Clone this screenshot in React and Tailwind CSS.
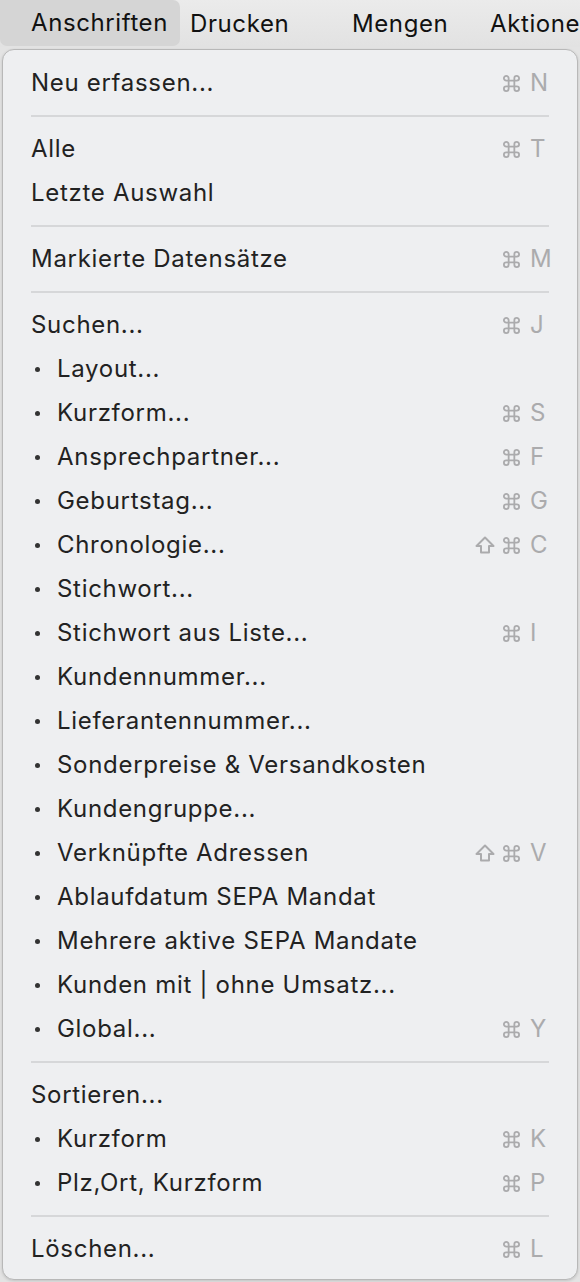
import React from "react";

const font = { fontFamily: "Inter, 'Noto Sans', sans-serif" };

function Shift() {
  return (
    <svg width="22" height="20" viewBox="0 0 22 20" className="inline-block">
      <path d="M11 2.5 L19.5 11 L15 11 L15 17.5 L7 17.5 L7 11 L2.5 11 Z" fill="none" stroke="#ababad" strokeWidth="2" strokeLinejoin="round" />
    </svg>
  );
}

function Cmd() {
  return (
    <svg width="19" height="19" viewBox="0 0 20 20" className="inline-block">
      <path d="M7 7 H13 V13 H7 Z M7 7 V4.5 A2.5 2.5 0 1 0 4.5 7 H7 M13 7 V4.5 A2.5 2.5 0 1 1 15.5 7 H13 M7 13 V15.5 A2.5 2.5 0 1 1 4.5 13 H7 M13 13 V15.5 A2.5 2.5 0 1 0 15.5 13 H13" fill="none" stroke="#ababad" strokeWidth="1.9" />
    </svg>
  );
}

const items = [
  { t: "Neu erfassen...", k: "N" },
  "sep",
  { t: "Alle", k: "T" },
  { t: "Letzte Auswahl" },
  "sep",
  { t: "Markierte Datensätze", k: "M" },
  "sep",
  { t: "Suchen...", k: "J" },
  { t: "Layout...", b: true },
  { t: "Kurzform...", b: true, k: "S" },
  { t: "Ansprechpartner...", b: true, k: "F" },
  { t: "Geburtstag...", b: true, k: "G" },
  { t: "Chronologie...", b: true, k: "C", s: true },
  { t: "Stichwort...", b: true },
  { t: "Stichwort aus Liste...", b: true, k: "I" },
  { t: "Kundennummer...", b: true },
  { t: "Lieferantennummer...", b: true },
  { t: "Sonderpreise & Versandkosten", b: true },
  { t: "Kundengruppe...", b: true },
  { t: "Verknüpfte Adressen", b: true, k: "V", s: true },
  { t: "Ablaufdatum SEPA Mandat", b: true },
  { t: "Mehrere aktive SEPA Mandate", b: true },
  { t: "Kunden mit | ohne Umsatz...", b: true },
  { t: "Global...", b: true, k: "Y" },
  "sep",
  { t: "Sortieren..." },
  { t: "Kurzform", b: true, k: "K" },
  { t: "Plz,Ort, Kurzform", b: true, k: "P" },
  "sep",
  { t: "Löschen...", k: "L" },
];

export default function App() {
  return (
    <div className="w-[580px] h-[1282px] bg-[#e3e3e3] overflow-hidden" style={font}>
      <div className="h-[47px] flex items-center text-[24px] tracking-[0.6px] text-[#111] bg-gradient-to-b from-[#ebebeb] to-[#e2e2e2] whitespace-nowrap">
        <div className="h-[46px] w-[180px] shrink-0 self-start rounded-b-[7px] rounded-tr-[7px] bg-[#d5d5d5] flex items-center pl-[31px]">
          Anschriften
        </div>
        <div className="w-[162px] shrink-0 pl-[10px]">Drucken</div>
        <div className="w-[138px] shrink-0 pl-[10px]">Mengen</div>
        <div className="shrink-0 pl-[10px]">Aktionen</div>
      </div>
      <div className="mx-[2px] mt-[2px] rounded-[12px] border border-[#b8b8b8] bg-[#eeeff1] pt-[11px] pb-[8px] shadow-[0_1px_3px_rgba(0,0,0,0.15)]">
        {items.map((it, i) =>
          it === "sep" ? (
            <div key={i} className="h-[22px] flex items-center px-[28px]">
              <div className="h-[2px] w-full bg-[#d6d7d9]" />
            </div>
          ) : (
            <div key={i} className="h-[44px] flex items-center pl-[28px] pr-[31px] text-[24px] tracking-[0.7px] text-[#222]">
              {it.b && (
                <span className="w-[26px] flex items-center pl-[4px]">
                  <span className="w-[5px] h-[5px] rounded-full bg-[#333]" />
                </span>
              )}
              <span className="flex-1 whitespace-nowrap">{it.t}</span>
              {it.k && (
                <span className="flex items-center text-[#ababad]">
                  {it.s && <span className="mr-[6px] flex"><Shift /></span>}
                  <Cmd />
                  <span className="w-[25px] pl-[9px] text-[24px] tracking-normal">{it.k}</span>
                </span>
              )}
            </div>
          )
        )}
      </div>
    </div>
  );
}
